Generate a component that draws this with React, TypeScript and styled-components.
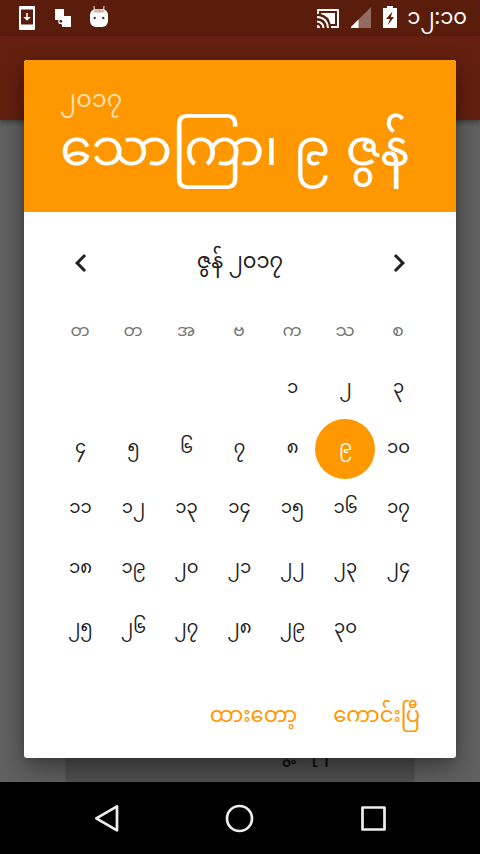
import React from 'react';
import styled, { createGlobalStyle } from 'styled-components';

const Global = createGlobalStyle`
  * { box-sizing: border-box; }
  body { margin: 0; background: #616161; }
  svg { display: block; }
`;

const Screen = styled.div`
  position: relative;
  display: flex;
  flex-direction: column;
  width: 480px;
  height: 854px;
  overflow: hidden;
  background: #616161;
  color: #212121;
  font-family: 'Noto Sans Myanmar', 'Noto Sans', sans-serif;
`;

const StatusBar = styled.header`
  display: flex;
  justify-content: space-between;
  flex: none;
  height: 36px;
  padding: 0 13px 0 18px;
  background: #5a1d0c;
`;

const StatusGroup = styled.div<{ $gap: number }>`
  display: flex;
  align-items: center;
  gap: ${(p) => p.$gap}px;
`;

const Clock = styled.time`
  padding-top: 3px;
  font-size: 21px;
  line-height: 33px;
  color: #fff;
  white-space: nowrap;
`;

const Toolbar = styled.div`
  flex: none;
  height: 84px;
  background: #64200f;
  box-shadow: 0 2px 5px rgba(0, 0, 0, 0.4);
`;

const Backdrop = styled.main`
  display: flex;
  flex: 1;
  flex-direction: column;
  justify-content: flex-end;
  align-items: center;
`;

const BackCard = styled.section`
  display: flex;
  justify-content: flex-end;
  align-items: flex-end;
  gap: 5px;
  width: 348px;
  height: 60px;
  padding: 0 82px 8px 0;
  border-radius: 4px;
  background: #515151;
  box-shadow: 0 0 3px rgba(0, 0, 0, 0.2);
  color: #111;
  font-size: 20px;
  font-weight: 600;
  line-height: 40px;
  white-space: nowrap;
`;

const NavBar = styled.nav`
  display: flex;
  flex: none;
  align-items: center;
  justify-content: space-between;
  height: 72px;
  padding: 0 91px;
  background: #000;
`;

const Dialog = styled.section`
  position: absolute;
  top: 60px;
  left: 24px;
  display: flex;
  flex-direction: column;
  width: 432px;
  height: 698px;
  overflow: hidden;
  border-radius: 3px;
  background: #fff;
`;

const DialogShadow = styled.div`
  position: absolute;
  top: 60px;
  left: 24px;
  width: 432px;
  height: 698px;
  border-radius: 3px;
  box-shadow: 0 12px 26px rgba(0, 0, 0, 0.38), 0 0 8px rgba(0, 0, 0, 0.15);
  clip-path: inset(-60px -24px -24px -24px);
`;

const DateHeader = styled.header`
  flex: none;
  height: 152px;
  padding: 24px 36px 0;
  background: #ff9800;
  color: #fff;
  white-space: nowrap;
`;

const Year = styled.div`
  height: 33px;
  font-size: 24px;
  line-height: 36px;
  color: rgba(255, 255, 255, 0.7);
`;

const SelectedDate = styled.h1`
  margin: 0;
  font-size: 51px;
  font-weight: 400;
  line-height: 72px;
  word-spacing: 2px;
`;

const MonthRow = styled.div`
  display: flex;
  align-items: center;
  justify-content: space-between;
  flex: none;
  height: 102px;
  padding: 0 39px;
`;

const MonthTitle = styled.h2`
  margin: 0;
  font-size: 21px;
  font-weight: 400;
  line-height: 36px;
`;

const ArrowButton = styled.button`
  width: 36px;
  height: 36px;
  padding: 0;
  border: 0;
  background: none;
`;

const Grid = styled.div<{ $row: number }>`
  display: grid;
  grid-template-columns: repeat(7, 53px);
  grid-auto-rows: ${(p) => p.$row}px;
  justify-content: center;
  flex: none;
  padding-right: 2px;
`;

const Weekday = styled.span`
  padding-top: 3px;
  font-size: 17px;
  line-height: 30px;
  text-align: center;
  color: #757575;
`;

const Day = styled.span<{ $selected?: boolean }>`
  width: 60px;
  height: 60px;
  padding-left: 1px;
  justify-self: center;
  border-radius: 50%;
  background: ${(p) => (p.$selected ? '#ff9800' : 'transparent')};
  color: ${(p) => (p.$selected ? '#fff' : '#212121')};
  font-size: 18px;
  line-height: 60px;
  text-align: center;
`;

const FirstDay = styled(Day)`
  grid-column: 5;
`;

const Actions = styled.footer`
  display: flex;
  justify-content: flex-end;
  gap: 36px;
  margin-top: auto;
  padding: 0 36px 23px 0;
`;

const Action = styled.button`
  padding: 0;
  border: 0;
  background: none;
  color: #ff9800;
  font: 400 21.2px/36px 'Noto Sans Myanmar', sans-serif;
  white-space: nowrap;
`;

const weekdays = ['တ', 'တ', 'အ', 'ဗ', 'က', 'သ', 'စ'];
const toBurmese = (n: number) =>
  String(n).replace(/\d/g, (d) => String.fromCharCode(0x1040 + Number(d)));
const days = Array.from({ length: 30 }, (_, i) => i + 1);

export default function App() {
  return (
    <Screen>
      <Global />
      <StatusBar>
        <StatusGroup $gap={18}>
          <svg width="18" height="36" viewBox="0 0 18 36">
            <path fill="#fff" fillRule="evenodd" d="M1 7q0-1 1-1h14q1 0 1 1v22q0 1-1 1H2q-1 0-1-1zM3 9.500v15h12v-15z" />
            <path fill="#fff" d="M8.200 13h1.600v4h3L9 20.800 5.200 17h3z" />
          </svg>
          <svg width="18" height="36" viewBox="0 0 18 36">
            <path fill="#fff" d="M1 9h9v7h7v11H8v-2.500l-3-1V20H1z" />
            <circle cx="6.800" cy="21.500" r="2.600" fill="#fff" />
            <circle cx="6.800" cy="21.300" r="1.400" fill="#5a1d0c" />
          </svg>
          <svg width="18" height="36" viewBox="0 0 18 36">
            <path d="M4.500 11L4 6M13.500 11l.5-5" stroke="#dcc9c5" strokeWidth="1.200" />
            <rect y="9" width="18" height="18" rx="6" fill="#fff" />
            <path d="M3 12q1-3 6-3t6 3q-6 1.500-12 0" fill="#ccb6b1" />
            <circle cx="4.700" cy="18" r="1.200" fill="#4a3a38" />
            <circle cx="13.300" cy="18" r="1.200" fill="#4a3a38" />
          </svg>
        </StatusGroup>
        <StatusGroup $gap={10}>
          <svg width="24" height="36" viewBox="0 0 24 36">
            <path fill="#fff" d="M1 9h20q1 0 1 1v17q0 1-1 1h-7v-2h6V11H2v3H0v-4q0-1 1-1zM4 13h14v11h-4.500Q12 16 4 14zM0 25q3 0 3 3H0zM0 20.500q7 .5 7.500 7.500h-2Q5 23 0 22.500zM0 16q11 .5 12 12h-2Q9.500 18.500 0 18z" />
          </svg>
          <svg width="22" height="36" viewBox="0 0 22 36">
            <path fill="#fff" fillOpacity=".35" d="M-1 28L20 7v21z" />
            <path fill="#fff" d="M-1 28l8.500-8.500V28z" />
          </svg>
          <svg width="14" height="36" viewBox="0 0 14 36">
            <path fill="#fff" d="M4 6h6v2h4v20H0V8h4z" />
            <path fill="#5a1d0c" d="M9.500 11.500L3 19h4l-2.500 6.500L11 17H7.800z" />
          </svg>
          <Clock>၁၂:၁၀</Clock>
        </StatusGroup>
      </StatusBar>
      <Toolbar />
      <Backdrop>
        <BackCard>
          <span>ဇွ့</span>
          <span>တုန်</span>
        </BackCard>
      </Backdrop>
      <NavBar>
        <svg width="32" height="32" viewBox="0 0 32 32" fill="none" stroke="#eee" strokeWidth="2.700" strokeLinejoin="round">
          <path d="M26 4.300v24L5.300 16.300z" />
        </svg>
        <svg width="32" height="32" viewBox="0 0 32 32" fill="none" stroke="#eee" strokeWidth="2.700">
          <circle cx="15.500" cy="16.500" r="12.500" />
        </svg>
        <svg width="32" height="32" viewBox="0 0 32 32" fill="none" stroke="#eee" strokeWidth="2.700" strokeLinejoin="round">
          <rect x="5.500" y="5.500" width="22" height="22" />
        </svg>
      </NavBar>
      <DialogShadow />
      <Dialog>
        <DateHeader>
          <Year>၂၀၁၇</Year>
          <SelectedDate>သောကြာ၊ ၉ ဇွန်</SelectedDate>
        </DateHeader>
        <MonthRow>
          <ArrowButton aria-label="ယခင်လ">
            <svg width="36" height="36" viewBox="0 0 24 24" fill="#212121">
              <path d="M15.410 7.410L14 6l-6 6 6 6 1.410-1.410L10.830 12z" />
            </svg>
          </ArrowButton>
          <MonthTitle>ဇွန် ၂၀၁၇</MonthTitle>
          <ArrowButton aria-label="နောက်လ">
            <svg width="36" height="36" viewBox="0 0 24 24" fill="#212121">
              <path d="M10 6L8.590 7.410 13.170 12l-4.580 4.590L10 18l6-6z" />
            </svg>
          </ArrowButton>
        </MonthRow>
        <Grid $row={45}>
          {weekdays.map((d, i) => (
            <Weekday key={i}>{d}</Weekday>
          ))}
        </Grid>
        <Grid $row={60}>
          {days.map((n) =>
            n === 1 ? (
              <FirstDay key={n}>{toBurmese(n)}</FirstDay>
            ) : (
              <Day key={n} $selected={n === 9}>
                {toBurmese(n)}
              </Day>
            ),
          )}
        </Grid>
        <Actions>
          <Action>ထားတော့</Action>
          <Action>ကောင်းပြီ</Action>
        </Actions>
      </Dialog>
    </Screen>
  );
}
